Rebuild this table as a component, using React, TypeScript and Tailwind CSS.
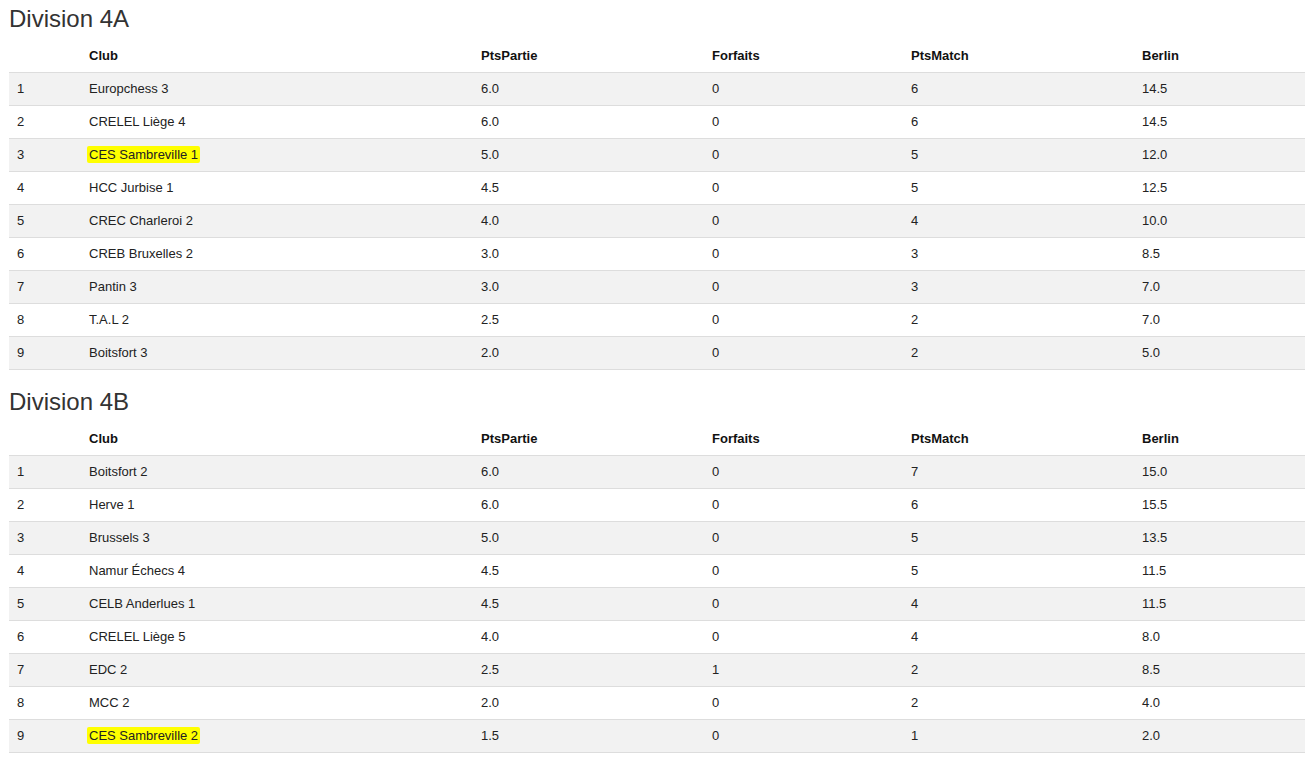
import React from 'react';

type Row = {
  rank: number;
  club: string;
  ptsPartie: string;
  forfaits: number;
  ptsMatch: number;
  berlin: string;
  highlight?: boolean;
};

const division4A: Row[] = [
  { rank: 1, club: 'Europchess 3', ptsPartie: '6.0', forfaits: 0, ptsMatch: 6, berlin: '14.5' },
  { rank: 2, club: 'CRELEL Liège 4', ptsPartie: '6.0', forfaits: 0, ptsMatch: 6, berlin: '14.5' },
  { rank: 3, club: 'CES Sambreville 1', ptsPartie: '5.0', forfaits: 0, ptsMatch: 5, berlin: '12.0', highlight: true },
  { rank: 4, club: 'HCC Jurbise 1', ptsPartie: '4.5', forfaits: 0, ptsMatch: 5, berlin: '12.5' },
  { rank: 5, club: 'CREC Charleroi 2', ptsPartie: '4.0', forfaits: 0, ptsMatch: 4, berlin: '10.0' },
  { rank: 6, club: 'CREB Bruxelles 2', ptsPartie: '3.0', forfaits: 0, ptsMatch: 3, berlin: '8.5' },
  { rank: 7, club: 'Pantin 3', ptsPartie: '3.0', forfaits: 0, ptsMatch: 3, berlin: '7.0' },
  { rank: 8, club: 'T.A.L 2', ptsPartie: '2.5', forfaits: 0, ptsMatch: 2, berlin: '7.0' },
  { rank: 9, club: 'Boitsfort 3', ptsPartie: '2.0', forfaits: 0, ptsMatch: 2, berlin: '5.0' },
];

const division4B: Row[] = [
  { rank: 1, club: 'Boitsfort 2', ptsPartie: '6.0', forfaits: 0, ptsMatch: 7, berlin: '15.0' },
  { rank: 2, club: 'Herve 1', ptsPartie: '6.0', forfaits: 0, ptsMatch: 6, berlin: '15.5' },
  { rank: 3, club: 'Brussels 3', ptsPartie: '5.0', forfaits: 0, ptsMatch: 5, berlin: '13.5' },
  { rank: 4, club: 'Namur Échecs 4', ptsPartie: '4.5', forfaits: 0, ptsMatch: 5, berlin: '11.5' },
  { rank: 5, club: 'CELB Anderlues 1', ptsPartie: '4.5', forfaits: 0, ptsMatch: 4, berlin: '11.5' },
  { rank: 6, club: 'CRELEL Liège 5', ptsPartie: '4.0', forfaits: 0, ptsMatch: 4, berlin: '8.0' },
  { rank: 7, club: 'EDC 2', ptsPartie: '2.5', forfaits: 1, ptsMatch: 2, berlin: '8.5' },
  { rank: 8, club: 'MCC 2', ptsPartie: '2.0', forfaits: 0, ptsMatch: 2, berlin: '4.0' },
  { rank: 9, club: 'CES Sambreville 2', ptsPartie: '1.5', forfaits: 0, ptsMatch: 1, berlin: '2.0', highlight: true },
];

function StandingsTable({ title, rows, className }: { title: string; rows: Row[]; className?: string }) {
  return (
    <section className={className}>
      <h3 className="text-[24px] leading-[26px] font-normal text-[#333] mb-[8px]">{title}</h3>
      <table className="table-fixed w-[1296px] border-collapse border-b border-[#ddd] text-[13px] leading-[16px] text-[#222]">
        <thead>
          <tr>
            <th className="w-[72px] p-2 text-left font-bold" />
            <th className="w-[392px] p-2 text-left font-bold text-[#111]">Club</th>
            <th className="w-[231px] p-2 text-left font-bold text-[#111]">PtsPartie</th>
            <th className="w-[199px] p-2 text-left font-bold text-[#111]">Forfaits</th>
            <th className="w-[231px] p-2 text-left font-bold text-[#111]">PtsMatch</th>
            <th className="p-2 text-left font-bold text-[#111]">Berlin</th>
          </tr>
        </thead>
        <tbody>
          {rows.map((r, i) => (
            <tr key={r.rank} className={i % 2 === 0 ? 'bg-[#f2f2f2]' : 'bg-white'}>
              <td className="border-t border-[#ddd] p-2">{r.rank}</td>
              <td className="border-t border-[#ddd] p-2">
                {r.highlight ? (
                  <span className="bg-[#ffff00] px-[2px] -mx-[2px] py-[1px] rounded-[2px]">{r.club}</span>
                ) : (
                  r.club
                )}
              </td>
              <td className="border-t border-[#ddd] p-2">{r.ptsPartie}</td>
              <td className="border-t border-[#ddd] p-2">{r.forfaits}</td>
              <td className="border-t border-[#ddd] p-2">{r.ptsMatch}</td>
              <td className="border-t border-[#ddd] p-2">{r.berlin}</td>
            </tr>
          ))}
        </tbody>
      </table>
    </section>
  );
}

export default function App() {
  return (
    <div className="bg-white min-h-screen pl-[9px] pt-[6px] font-['Liberation_Sans',Arial,sans-serif]">
      <StandingsTable title="Division 4A" rows={division4A} />
      <StandingsTable title="Division 4B" rows={division4B} className="mt-[19px]" />
    </div>
  );
}
